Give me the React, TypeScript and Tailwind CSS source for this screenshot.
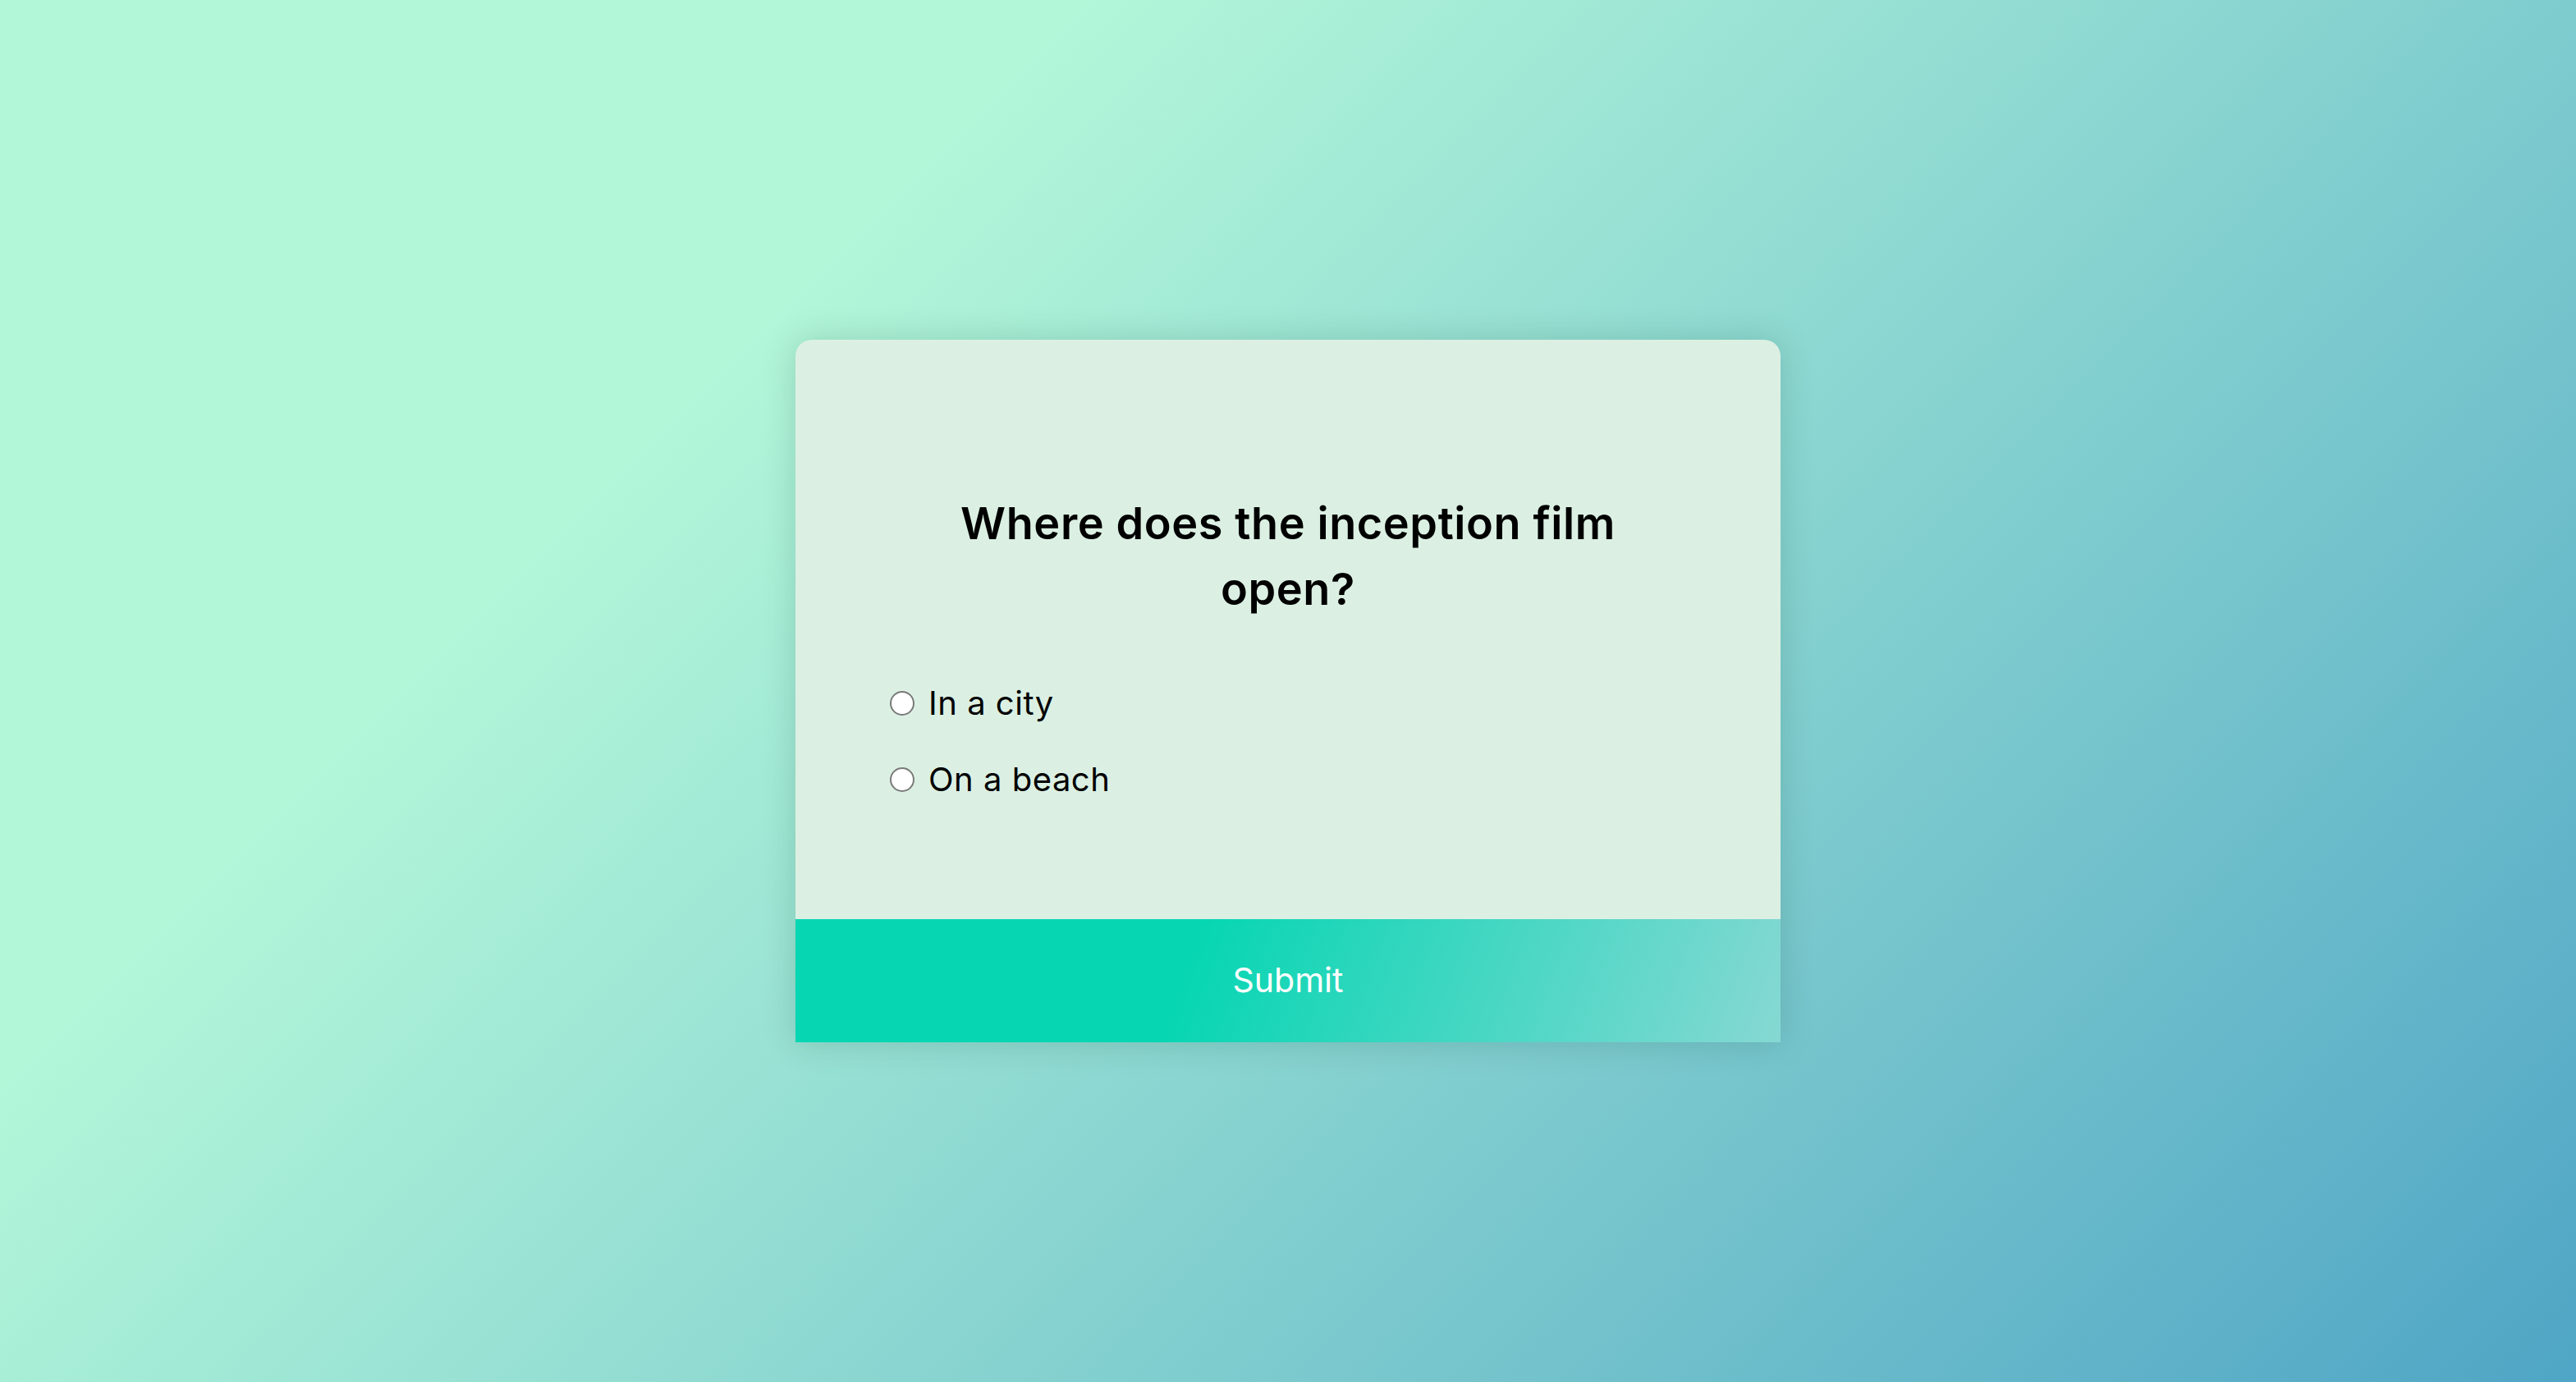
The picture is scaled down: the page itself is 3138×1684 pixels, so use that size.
import React, { useState } from 'react';

const OPTIONS = ['In a city', 'On a beach'];

export default function App() {
  const [answer, setAnswer] = useState<string | null>(null);

  return (
    <div
      className="min-h-screen w-full flex items-center justify-center bg-[linear-gradient(135deg,#b3f7d9_27%,#4fa5c5_100%)]"
      style={{ fontFamily: 'Inter, "Liberation Sans", sans-serif' }}
    >
      {/* Quiz card */}
      <div className="w-[1200px] bg-[#dbf0e3] rounded-t-[20px] shadow-[0_0_40px_rgba(0,60,40,0.18)] flex flex-col overflow-hidden">
        <div className="pt-[184px] pb-[140px] px-[115px]">
          <h2 className="max-w-[900px] mx-auto text-center text-[54px] leading-[80px] font-semibold text-black tracking-[0.6px]">
            Where does the inception film open?
          </h2>

          <ul className="mt-[69px] flex flex-col gap-[33px]">
            {OPTIONS.map((opt) => (
              <li key={opt} className="h-[60px] flex items-center gap-[17px]">
                <input
                  type="radio"
                  name="answer"
                  checked={answer === opt}
                  onChange={() => setAnswer(opt)}
                  className="appearance-none w-[30px] h-[30px] rounded-full bg-white border-2 border-[#7a7a7a] checked:border-[9px] checked:border-[#0a84ff] shrink-0"
                />
                <label className="text-[40px] text-black tracking-[0.5px] leading-[60px]">{opt}</label>
              </li>
            ))}
          </ul>
        </div>

        <button className="h-[150px] w-full bg-[linear-gradient(110deg,#07d6b3_40%,#86d8d3_100%)] text-white text-[41px] font-normal">
          Submit
        </button>
      </div>
    </div>
  );
}
